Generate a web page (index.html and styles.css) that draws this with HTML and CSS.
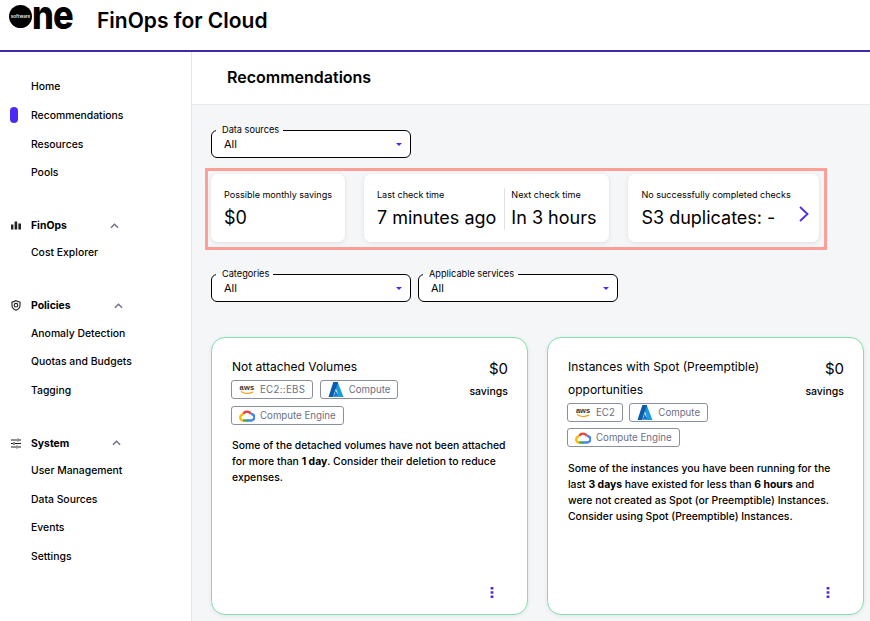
FILE: index.html
```html
<!DOCTYPE html>
<html lang="en">
<head>
    <meta charset="UTF-8">
    <meta name="viewport" content="width=device-width, initial-scale=1.0">
    <title>FinOps for Cloud</title>
    <link rel="stylesheet" href="styles.css">
</head>
<body>
    <header class="topbar">
        <div class="logo">
            <span class="logo-circle">software</span>
            <span class="logo-ne">ne</span>
        </div>
        <div class="app-name">FinOps for Cloud</div>
    </header>

    <div class="layout">
        <nav class="sidebar">
            <div class="nav-group">
                <a class="nav-item">Home</a>
                <a class="nav-item active">Recommendations</a>
                <a class="nav-item">Resources</a>
                <a class="nav-item">Pools</a>
            </div>
            <div class="nav-group">
                <div class="nav-head">
                    <svg class="nav-icon" viewBox="0 0 10 10"><path fill="#222" d="M0 4h2.400v5H0zM3.600 1h2.600v8H3.600zM7.400 3h2.600v6H7.400z"/></svg>
                    <span>FinOps</span>
                    <svg class="chevron" viewBox="0 0 10 6"><path fill="none" stroke="#6b7085" stroke-width="1.500" d="M1 5l4-4 4 4"/></svg>
                </div>
                <a class="nav-item">Cost Explorer</a>
            </div>
            <div class="nav-group">
                <div class="nav-head">
                    <svg class="nav-icon" viewBox="0 0 10 11"><path fill="none" stroke="#222" stroke-width="1.100" d="M5 .7l4 1.500v3.200c0 2.300-1.700 3.900-4 4.900-2.300-1-4-2.600-4-4.900V2.200z"/><circle cx="5" cy="5.200" r="1.800" fill="none" stroke="#222" stroke-width="1.100"/></svg>
                    <span>Policies</span>
                    <svg class="chevron" viewBox="0 0 10 6"><path fill="none" stroke="#6b7085" stroke-width="1.500" d="M1 5l4-4 4 4"/></svg>
                </div>
                <a class="nav-item">Anomaly Detection</a>
                <a class="nav-item">Quotas and Budgets</a>
                <a class="nav-item">Tagging</a>
            </div>
            <div class="nav-group">
                <div class="nav-head">
                    <svg class="nav-icon" viewBox="0 0 10 10"><path fill="none" stroke="#222" stroke-width="1" d="M0 1.500h6M8 1.500h2M7 0v3M0 5h2M4 5h6M3 3.500v3M0 8.500h5M7 8.500h3M6 7v3"/></svg>
                    <span>System</span>
                    <svg class="chevron" viewBox="0 0 10 6"><path fill="none" stroke="#6b7085" stroke-width="1.500" d="M1 5l4-4 4 4"/></svg>
                </div>
                <a class="nav-item">User Management</a>
                <a class="nav-item">Data Sources</a>
                <a class="nav-item">Events</a>
                <a class="nav-item">Settings</a>
            </div>
        </nav>

        <main class="main">
            <div class="page-head">
                <h1>Recommendations</h1>
            </div>

            <div class="content">
                <div class="filter-row">
                    <fieldset class="select">
                        <legend>Data sources</legend>
                        <span>All</span>
                        <i class="caret"></i>
                    </fieldset>
                </div>

                <section class="stats">
                    <div class="stat-card">
                        <div class="stat">
                            <div class="stat-label">Possible monthly savings</div>
                            <div class="stat-value">$0</div>
                        </div>
                    </div>
                    <div class="stat-card">
                        <div class="stat stat-split">
                            <div class="stat-label">Last check time</div>
                            <div class="stat-value">7 minutes ago</div>
                        </div>
                        <div class="stat">
                            <div class="stat-label">Next check time</div>
                            <div class="stat-value">In 3 hours</div>
                        </div>
                    </div>
                    <div class="stat-card stat-card-last">
                        <div class="stat">
                            <div class="stat-label">No successfully completed checks</div>
                            <div class="stat-value">S3 duplicates: -</div>
                        </div>
                        <svg class="next" viewBox="0 0 10 16"><path fill="none" stroke="#4a2bf5" stroke-width="1.800" d="M1 1l7.500 7L1 15"/></svg>
                    </div>
                </section>

                <div class="filter-row">
                    <fieldset class="select">
                        <legend>Categories</legend>
                        <span>All</span>
                        <i class="caret"></i>
                    </fieldset>
                    <fieldset class="select">
                        <legend>Applicable services</legend>
                        <span>All</span>
                        <i class="caret"></i>
                    </fieldset>
                </div>

                <section class="cards">
                    <article class="card">
                        <div class="card-top">
                            <div class="card-title">
                                <h2>Not attached Volumes</h2>
                                <div class="tags">
                                    <span class="tag tag-long">
                                        <svg class="tag-icon" viewBox="0 0 16 12"><text x="8" y="6.500" text-anchor="middle" font-family="Liberation Sans" font-weight="700" font-size="7.500" fill="#333">aws</text><path fill="none" stroke="#f90" stroke-width="1.100" d="M2 8c3.500 2.400 8 2.400 12 .4"/></svg>
                                        EC2::EBS
                                    </span>
                                    <span class="tag">
                                        <svg class="tag-icon" viewBox="0 0 14 14"><path fill="#1a9be0" d="M8.600 0L14 14H9.600L6 3.500z"/><path fill="#0f78c8" d="M6.500 8L10 13.800H4.200L5.800 11z"/><path fill="#0b5cab" d="M4.500 0H9L4.200 14H0z"/></svg>
                                        Compute
                                    </span>
                                    <span class="tag">
                                        <svg class="tag-icon" viewBox="0 0 16 13"><path fill="none" stroke="#ea4335" stroke-width="2.400" d="M4.200 5A4.200 4.200 0 0 1 11.800 5"/><path fill="none" stroke="#4285f4" stroke-width="2.400" d="M11.800 5a3 3 0 0 1 .6 6.500H8"/><path fill="none" stroke="#34a853" stroke-width="2.400" d="M8.500 11.500H4"/><path fill="none" stroke="#fbbc05" stroke-width="2.400" d="M4.200 11.500A3 3 0 0 1 4.200 5.500"/></svg>
                                        Compute Engine
                                    </span>
                                </div>
                            </div>
                            <div class="savings">
                                <div class="savings-value">$0</div>
                                <div class="savings-label">savings</div>
                            </div>
                        </div>
                        <p class="card-text">Some of the detached volumes have not been attached for more than <b>1 day</b>. Consider their deletion to reduce expenses.</p>
                        <div class="card-foot">
                            <svg class="kebab" viewBox="0 0 4 12"><path fill="#4a2bf5" d="M.5 0h3v2.800h-3zM.5 4.600h3v2.800h-3zM.5 9.200h3V12h-3z"/></svg>
                        </div>
                    </article>

                    <article class="card">
                        <div class="card-top">
                            <div class="card-title">
                                <h2>Instances with Spot (Preemptible) opportunities</h2>
                                <div class="tags">
                                    <span class="tag">
                                        <svg class="tag-icon" viewBox="0 0 16 12"><text x="8" y="6.500" text-anchor="middle" font-family="Liberation Sans" font-weight="700" font-size="7.500" fill="#333">aws</text><path fill="none" stroke="#f90" stroke-width="1.100" d="M2 8c3.500 2.400 8 2.400 12 .4"/></svg>
                                        EC2
                                    </span>
                                    <span class="tag">
                                        <svg class="tag-icon" viewBox="0 0 14 14"><path fill="#1a9be0" d="M8.600 0L14 14H9.600L6 3.500z"/><path fill="#0f78c8" d="M6.500 8L10 13.800H4.200L5.800 11z"/><path fill="#0b5cab" d="M4.500 0H9L4.200 14H0z"/></svg>
                                        Compute
                                    </span>
                                    <span class="tag">
                                        <svg class="tag-icon" viewBox="0 0 16 13"><path fill="none" stroke="#ea4335" stroke-width="2.400" d="M4.200 5A4.200 4.200 0 0 1 11.800 5"/><path fill="none" stroke="#4285f4" stroke-width="2.400" d="M11.800 5a3 3 0 0 1 .6 6.500H8"/><path fill="none" stroke="#34a853" stroke-width="2.400" d="M8.500 11.500H4"/><path fill="none" stroke="#fbbc05" stroke-width="2.400" d="M4.200 11.500A3 3 0 0 1 4.200 5.500"/></svg>
                                        Compute Engine
                                    </span>
                                </div>
                            </div>
                            <div class="savings">
                                <div class="savings-value">$0</div>
                                <div class="savings-label">savings</div>
                            </div>
                        </div>
                        <p class="card-text">Some of the instances you have been running for the last <b>3 days</b> have existed for less than <b>6 hours</b> and<br>were not created as Spot (or Preemptible) Instances. Consider using Spot (Preemptible) Instances.</p>
                        <div class="card-foot">
                            <svg class="kebab" viewBox="0 0 4 12"><path fill="#4a2bf5" d="M.5 0h3v2.800h-3zM.5 4.600h3v2.800h-3zM.5 9.200h3V12h-3z"/></svg>
                        </div>
                    </article>
                </section>
            </div>
        </main>
    </div>
</body>
</html>
```

FILE: styles.css
```css
* {
    box-sizing: border-box;
}

html,
body {
    height: 100%;
}

body {
    margin: 0;
    overflow: hidden;
    font-family: 'Inter', 'Liberation Sans', sans-serif;
    color: #000;
    background-color: #fff;
}

.topbar {
    display: flex;
    align-items: center;
    height: 52px;
    padding: 0 0 10px 9px;
    border-bottom: 2px solid #3f2aa8;
}

.logo {
    display: flex;
    align-items: center;
    width: 88px;
    margin-bottom: 7px;
}

.logo-circle {
    display: flex;
    align-items: center;
    justify-content: center;
    width: 23px;
    height: 23px;
    border-radius: 50%;
    background-color: #000;
    color: #ddd;
    font-size: 4.500px;
    font-weight: 700;
}

.logo-ne {
    margin-bottom: 4px;
    font-size: 40px;
    font-weight: 800;
    line-height: 40px;
    letter-spacing: -1px;
    transform: scaleX(0.86);
    transform-origin: left center;
}

.app-name {
    font-size: 21px;
    font-weight: 600;
}

.layout {
    display: flex;
    height: calc(100% - 52px);
}

.sidebar {
    flex: none;
    width: 192px;
    padding-top: 20.600px;
    border-right: 1px solid #e4e6eb;
    font-size: 10.400px;
}

.nav-group + .nav-group {
    margin-top: 25.600px;
}

.nav-item {
    display: flex;
    align-items: center;
    height: 28.600px;
    padding-left: 10px;
    font-weight: 500;
}

.nav-item::before {
    content: "";
    width: 8px;
    height: 16px;
    margin-right: 13px;
    border-radius: 4px;
}

.nav-item.active::before {
    background-color: #4a2bf5;
}

.nav-head {
    display: flex;
    align-items: center;
    height: 26px;
    padding-left: 11px;
    font-weight: 700;
}

.nav-icon {
    width: 10px;
    height: 11px;
    margin-right: 10px;
}

.chevron {
    width: 9px;
    height: 6px;
    margin-left: 43px;
}

.main {
    flex: 1;
    min-width: 0;
    background-color: #f5f6f8;
}

.page-head {
    display: flex;
    align-items: center;
    height: 53px;
    padding: 0 0 2px 35px;
    background-color: #fff;
    border-bottom: 1px solid #e8eaee;
}

h1 {
    margin: 0;
    font-size: 16px;
    font-weight: 600;
}

.content {
    padding: 20px 0 0 19px;
}

.filter-row {
    display: flex;
    gap: 7px;
}

.select {
    display: flex;
    align-items: center;
    justify-content: space-between;
    width: 200px;
    height: 33px;
    margin: 0;
    padding: 0 8px 4px 12px;
    border: 1px solid #000;
    border-radius: 6px;
    background-color: #fff;
    font-size: 11px;
}

.select legend {
    margin-left: -8px;
    padding: 0 4px 0 6px;
    font-size: 9.200px;
    line-height: 10px;
}

.caret {
    width: 0;
    height: 0;
    border-left: 3px solid transparent;
    border-right: 3px solid transparent;
    border-top: 3px solid #4a2bf5;
}

.stats {
    display: inline-flex;
    gap: 19px;
    margin: 10px 0 19px -6px;
    padding: 3px 5px 5px 3px;
    border: 3px solid #ff9f97;
    vertical-align: top;
}

.stat-card {
    display: flex;
    align-items: flex-start;
    height: 68px;
    padding: 13.500px 13px 0;
    border-radius: 7px;
    background-color: #fff;
    box-shadow: 0 1px 4px rgba(0, 0, 0, 0.1);
}

.stat-card-last {
    gap: 8px;
    padding-right: 10px;
}

.stat + .stat {
    padding-left: 6px;
}

.stat-split {
    padding-right: 8px;
    border-right: 1px solid #dfe1e6;
}

.stat-label {
    font-size: 9.050px;
    line-height: 14px;
}

.stat-value {
    margin-top: 4px;
    font-size: 18px;
    line-height: 24px;
}

.next {
    width: 10px;
    height: 16px;
    margin-top: 18.500px;
}

.cards {
    display: grid;
    grid-template-columns: 317px 317px;
    gap: 19px;
    margin-top: 35px;
}

.card {
    display: flex;
    flex-direction: column;
    height: 278px;
    padding: 18px 20px 16px;
    border: 1px solid #86e0ac;
    border-radius: 14px;
    background-color: #fff;
    box-shadow: 0 1px 4px rgba(0, 0, 0, 0.08);
}

.card-top {
    display: flex;
    justify-content: space-between;
    gap: 20px;
    margin-right: -1px;
}

h2 {
    margin: 0 0 1.500px;
    font-size: 12px;
    font-weight: 400;
    line-height: 22.500px;
}

.tags {
    display: flex;
    flex-wrap: wrap;
    gap: 6.500px;
    margin-left: -1px;
}

.tag {
    display: flex;
    align-items: center;
    gap: 5px;
    height: 19px;
    padding: 0 7px;
    border: 1px solid #8a90a0;
    border-radius: 3px;
    color: #6b7085;
    font-size: 9.700px;
}

.tag-long {
    letter-spacing: 0.3px;
}

.tag-icon {
    width: 16px;
    height: 15px;
}

.savings {
    flex: none;
    padding-top: 1px;
    text-align: right;
}

.savings-value {
    font-size: 15px;
    line-height: 24px;
}

.savings-label {
    margin-top: 4px;
    font-size: 10.500px;
    font-weight: 500;
}

.card-text {
    margin: 13.500px -3px 0 0;
    font-size: 10.400px;
    font-weight: 500;
    line-height: 16px;
}

.card-text b {
    font-weight: 700;
}

.card-foot {
    display: flex;
    justify-content: flex-end;
    margin-top: auto;
    padding-right: 13px;
}

.kebab {
    width: 4px;
    height: 11px;
}
```
